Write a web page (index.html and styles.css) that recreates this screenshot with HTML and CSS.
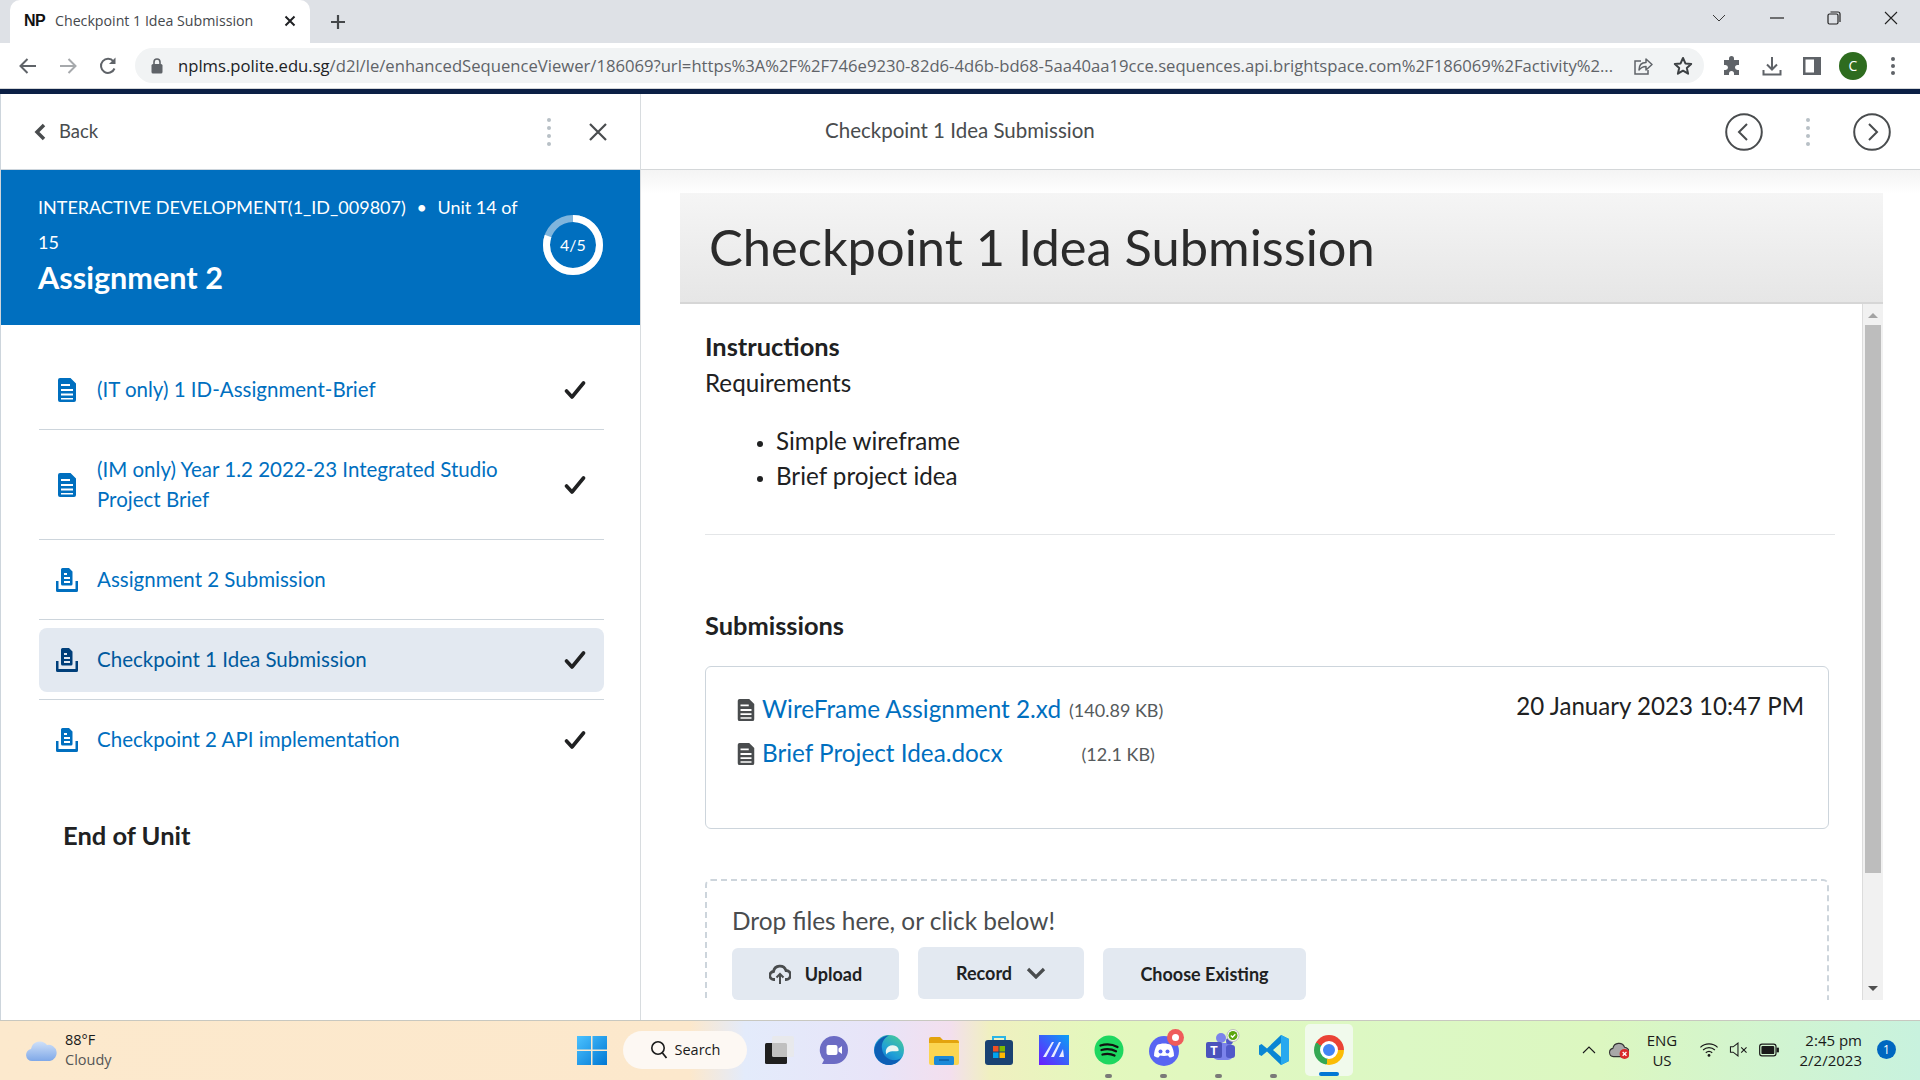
FILE: index.html
```html
<!DOCTYPE html>
<html lang="en">
<head>
<meta charset="utf-8">
<title>Checkpoint 1 Idea Submission</title>
<link rel="stylesheet" href="styles.css">
</head>
<body>
<svg class="defs" width="0" height="0" aria-hidden="true">
  <symbol id="doc" viewBox="0 0 18 24"><path fill-rule="evenodd" d="M2 0h10.500L18 5.500V22a2 2 0 0 1-2 2H2a2 2 0 0 1-2-2V2a2 2 0 0 1 2-2zM3 6v2h9V6zM3 11v2h12v-2zM3 15.500v2h12v-2zM3 20v1.500h12V20z"/></symbol>
  <symbol id="sub" viewBox="0 0 22 24"><path fill-rule="evenodd" d="M6.500 0H13l3.500 3.500V16a1.500 1.500 0 0 1-1.500 1.500H6.500A1.500 1.500 0 0 1 5 16V1.500A1.500 1.500 0 0 1 6.500 0zM8 5v2h3V5zM8 9v2h6V9zM8 13v2h6v-2z"/><path d="M0 13h2.500v8h17v-8H22v9.500a1.500 1.500 0 0 1-1.500 1.500h-19A1.500 1.500 0 0 1 0 22.500z"/></symbol>
  <symbol id="check" viewBox="0 0 22 20"><path d="M2.500 11l5.500 6L19.500 3" fill="none" stroke="currentColor" stroke-width="3.600" stroke-linecap="round" stroke-linejoin="round"/></symbol>
  <symbol id="vdots" viewBox="0 0 6 30"><g fill="#b8c0c6"><circle cx="3" cy="3" r="2"/><circle cx="3" cy="11" r="2"/><circle cx="3" cy="19" r="2"/><circle cx="3" cy="27" r="2"/></g></symbol>
</svg>

<header class="tabbar">
  <div class="tab">
    <span class="favicon">NP</span>
    <span class="tab-title">Checkpoint 1 Idea Submission</span>
    <svg class="tab-x" width="12" height="12" viewBox="0 0 12 12"><path d="M1.500 1.500l9 9M10.500 1.500l-9 9" stroke="#202124" stroke-width="2" fill="none"/></svg>
  </div>
  <svg class="new-tab" width="16" height="16" viewBox="0 0 16 16"><path d="M8 1v14M1 8h14" stroke="#44474a" stroke-width="2.200" fill="none"/></svg>
  <div class="win-controls">
    <svg class="wc-ch" width="14" height="8" viewBox="0 0 14 8"><path d="M1 1l6 6 6-6" stroke="#3a3a3a" fill="none"/></svg>
    <span class="wc"><svg width="14" height="2" viewBox="0 0 14 2"><path d="M0 1h14" stroke="#222" stroke-width="1.200"/></svg></span>
    <span class="wc"><svg width="14" height="14" viewBox="0 0 14 14"><rect x="1" y="3" width="10" height="10" rx="1.500" fill="none" stroke="#222" stroke-width="1.200"/><path d="M3.500 1H11a2 2 0 0 1 2 2v8" fill="none" stroke="#222" stroke-width="1.200"/></svg></span>
    <span class="wc"><svg width="14" height="14" viewBox="0 0 14 14"><path d="M1 1l12 12M13 1L1 13" stroke="#222" stroke-width="1.100" fill="none"/></svg></span>
  </div>
</header>

<nav class="toolbar">
  <svg class="tb-ico" width="20" height="20" viewBox="0 0 20 20"><path d="M18 10H3M9.500 3L2.500 10l7 7" stroke="#5f6368" stroke-width="2" fill="none"/></svg>
  <svg class="tb-ico" width="20" height="20" viewBox="0 0 20 20"><path d="M2 10h15M10.500 3l7 7-7 7" stroke="#a6a9ac" stroke-width="2" fill="none"/></svg>
  <svg class="tb-ico" width="20" height="20" viewBox="0 0 20 20"><path d="M16.500 12.500A7 7 0 1 1 15.500 5.500" stroke="#5f6368" stroke-width="2" fill="none"/><path d="M17.500 1.500V8H11z" fill="#5f6368"/></svg>
  <div class="omnibox">
    <svg class="lock" width="12" height="16" viewBox="0 0 12 16"><path d="M3 6V4a3 3 0 0 1 6 0v2" fill="none" stroke="#5f6368" stroke-width="1.600"/><rect x="0.500" y="6" width="11" height="9.500" rx="1.500" fill="#5f6368"/></svg>
    <span class="url"><span class="url-host">nplms.polite.edu.sg</span>/d2l/le/enhancedSequenceViewer/186069?url=https%3A%2F%2F746e9230-82d6-4d6b-bd68-5aa40aa19cce.sequences.api.brightspace.com%2F186069%2Factivity%2...</span>
    <svg class="omni-ico" width="20" height="20" viewBox="0 0 20 20"><path d="M8 5H2v13h13v-4" fill="none" stroke="#5f6368" stroke-width="1.500"/><path d="M6 14c0-5 3-7.500 7-7.500V3l6 5.500-6 5.500v-3.500c-3 0-5 1-7 3.500z" fill="none" stroke="#5f6368" stroke-width="1.500" stroke-linejoin="round"/></svg>
    <svg class="omni-ico" width="20" height="20" viewBox="0 0 20 20"><path d="M10 2l2.400 5.400 5.800.600-4.400 3.900 1.300 5.800L10 14.700l-5.100 3 1.300-5.800L1.800 8l5.800-.600z" fill="none" stroke="#3c4043" stroke-width="2" stroke-linejoin="round"/></svg>
  </div>
  <div class="tb-right">
    <svg width="20" height="20" viewBox="0 0 20 20"><path d="M7 2.500a2.500 2.500 0 0 1 5 0V4h5v5h-1.500a2.500 2.500 0 0 0 0 5H17v5h-5v-1.500a2.500 2.500 0 0 0-5 0V19H2v-5h1.500a2.500 2.500 0 0 0 0-5H2V4h5z" fill="#5f6368"/></svg>
    <svg width="20" height="20" viewBox="0 0 20 20"><path d="M10 1v12M5 8.500l5 5 5-5" stroke="#5f6368" stroke-width="2" fill="none"/><path d="M1.500 14v4.500h17V14" stroke="#5f6368" stroke-width="2" fill="none"/></svg>
    <svg width="20" height="20" viewBox="0 0 20 20"><path fill-rule="evenodd" d="M1 1h18v18H1zM3.500 3.500v13h8.500v-13z" fill="#5f6368"/></svg>
    <span class="avatar">C</span>
    <svg width="6" height="20" viewBox="0 0 6 20"><g fill="#5f6368"><circle cx="3" cy="3" r="2"/><circle cx="3" cy="10" r="2"/><circle cx="3" cy="17" r="2"/></g></svg>
  </div>
</nav>
<div class="navy"></div>

<main class="main">
  <aside class="side">
    <div class="side-top">
      <svg class="back-ch" width="12" height="18" viewBox="0 0 12 18"><path d="M10 2L3 9l7 7" stroke="#494c4e" stroke-width="3.500" fill="none"/></svg>
      <span class="back">Back</span>
      <svg class="side-dots" width="6" height="30"><use href="#vdots"/></svg>
      <svg class="side-x" width="20" height="20" viewBox="0 0 20 20"><path d="M2 2l16 16M18 2L2 18" stroke="#494c4e" stroke-width="2.200" fill="none"/></svg>
    </div>
    <div class="unit">
      <div class="unit-text">
        <p class="unit-crumb">INTERACTIVE DEVELOPMENT(1_ID_009807) <span class="dot">•</span> Unit 14 of 15</p>
        <h2 class="unit-title">Assignment 2</h2>
      </div>
      <div class="ring">
        <svg width="60" height="60" viewBox="0 0 60 60"><circle cx="30" cy="30" r="26.500" fill="none" stroke="#7fb5dd" stroke-width="7"/><circle cx="30" cy="30" r="26.500" fill="none" stroke="#fff" stroke-width="7" stroke-dasharray="133.200 33.300" transform="rotate(-90 30 30)"/></svg>
        <span class="ring-label">4/5</span>
      </div>
    </div>
    <ul class="items">
      <li class="row"><a class="item"><svg class="ico-doc"><use href="#doc"/></svg><span class="item-text">(IT only) 1 ID-Assignment-Brief</span><svg class="ico-check"><use href="#check"/></svg></a></li>
      <li class="row"><a class="item"><svg class="ico-doc"><use href="#doc"/></svg><span class="item-text">(IM only) Year 1.2 2022-23 Integrated Studio Project Brief</span><svg class="ico-check"><use href="#check"/></svg></a></li>
      <li class="row"><a class="item"><svg class="ico-sub"><use href="#sub"/></svg><span class="item-text">Assignment 2 Submission</span></a></li>
      <li class="row"><a class="item current"><svg class="ico-sub"><use href="#sub"/></svg><span class="item-text">Checkpoint 1 Idea Submission</span><svg class="ico-check"><use href="#check"/></svg></a></li>
      <li class="row last"><a class="item"><svg class="ico-sub"><use href="#sub"/></svg><span class="item-text">Checkpoint 2 API implementation</span><svg class="ico-check"><use href="#check"/></svg></a></li>
    </ul>
    <h3 class="end">End of Unit</h3>
  </aside>

  <section class="content">
    <div class="content-top">
      <span class="content-title">Checkpoint 1 Idea Submission</span>
      <div class="pager">
        <svg width="38" height="38" viewBox="0 0 38 38"><circle cx="19" cy="19" r="17.800" fill="none" stroke="#494c4e" stroke-width="2"/><path d="M22 11l-8 8 8 8" fill="none" stroke="#494c4e" stroke-width="2"/></svg>
        <svg width="6" height="30"><use href="#vdots"/></svg>
        <svg width="38" height="38" viewBox="0 0 38 38"><circle cx="19" cy="19" r="17.800" fill="none" stroke="#494c4e" stroke-width="2"/><path d="M16 11l8 8-8 8" fill="none" stroke="#494c4e" stroke-width="2"/></svg>
      </div>
    </div>
    <div class="page">
      <div class="page-head"><h1 class="page-title">Checkpoint 1 Idea Submission</h1></div>
      <div class="frame">
        <div class="frame-body">
          <h4 class="sec">Instructions</h4>
          <p class="req">Requirements</p>
          <ul class="bullets"><li>Simple wireframe</li><li>Brief project idea</li></ul>
          <hr class="rule">
          <h4 class="sec sec-sub">Submissions</h4>
          <div class="files">
            <div class="file-list">
              <div class="file"><svg class="ico-file"><use href="#doc"/></svg><a class="file-link">WireFrame Assignment 2.xd</a><span class="file-size">(140.89 KB)</span></div>
              <div class="file"><svg class="ico-file"><use href="#doc"/></svg><a class="file-link">Brief Project Idea.docx</a><span class="file-size wide">(12.1 KB)</span></div>
            </div>
            <div class="file-date">20 January 2023 10:47 PM</div>
          </div>
          <div class="drop">
            <p class="drop-text">Drop files here, or click below!</p>
            <div class="btns">
              <button class="btn btn-up"><svg width="22" height="22" viewBox="0 0 22 22"><path d="M6 16.500H5a4 4 0 0 1-.500-8A6.500 6.500 0 0 1 17 7.500a4.500 4.500 0 0 1 0 9h-1" fill="none" stroke="#494c4e" stroke-width="2.800"/><path d="M11 21v-9M7.500 14.500L11 11l3.500 3.500" fill="none" stroke="#494c4e" stroke-width="2"/></svg>Upload</button>
              <button class="btn btn-rec">Record<svg width="20" height="12" viewBox="0 0 20 12"><path d="M2 2l8 8 8-8" fill="none" stroke="#494c4e" stroke-width="3.200"/></svg></button>
              <button class="btn btn-ch">Choose Existing</button>
            </div>
          </div>
        </div>
        <div class="scrollbar">
          <span class="arr arr-up"></span>
          <span class="track"><span class="thumb"></span></span>
          <span class="arr arr-dn"></span>
        </div>
      </div>
    </div>
  </section>
</main>

<footer class="taskbar">
  <div class="weather">
    <svg width="32" height="24" viewBox="0 0 32 24"><defs><linearGradient id="cl" x1="0" y1="0" x2="0" y2="1"><stop offset="0" stop-color="#cfe0f8"/><stop offset="1" stop-color="#7fa8e8"/></linearGradient></defs><path d="M7 23a6 6 0 0 1-1-11.900A9 9 0 0 1 22 7a7 7 0 0 1 3 16z" fill="url(#cl)"/></svg>
    <div class="weather-text"><span class="temp">88°F</span><span class="cond">Cloudy</span></div>
  </div>
  <div class="apps">
    <span class="slot"><svg width="30" height="30" viewBox="0 0 30 30"><defs><linearGradient id="wn" x1="0" y1="0" x2="1" y2="1"><stop offset="0" stop-color="#4cc2ff"/><stop offset="1" stop-color="#0078d4"/></linearGradient></defs><path fill="url(#wn)" d="M0 1h14v13.500H0zM15.500 1H30v13.500H15.500zM0 16h14v14H0zM15.500 16H30v14H15.500z"/></svg></span>
    <span class="search"><svg width="18" height="20" viewBox="0 0 18 20"><circle cx="8" cy="8" r="6.200" fill="none" stroke="#1a1a1a" stroke-width="1.600"/><path d="M12.500 13l4 5" stroke="#1a1a1a" stroke-width="1.800"/></svg>Search</span>
    <span class="slot"><svg width="30" height="30" viewBox="0 0 30 30"><rect x="1" y="8" width="22" height="21" rx="1.500" fill="#1f1f1f"/><rect x="8" y="1" width="22" height="21" rx="1.500" fill="#e8e8e8" fill-opacity=".8"/></svg></span>
    <span class="slot"><svg width="30" height="30" viewBox="0 0 30 30"><path d="M15 1a14 14 0 0 1 0 28H3l2-4A14 14 0 0 1 15 1z" fill="#6c6cc4"/><rect x="7.500" y="10" width="11" height="10" rx="2" fill="#fff"/><path d="M19.500 13.500l3.500-2.500v8l-3.500-2.500z" fill="#fff"/></svg></span>
    <span class="slot"><svg width="30" height="30" viewBox="0 0 30 30"><defs><linearGradient id="ed" x1="1" y1="0" x2="0.300" y2="1"><stop offset="0" stop-color="#4ed18f"/><stop offset="0.600" stop-color="#1f9fd8"/><stop offset="1" stop-color="#0f6cc2"/></linearGradient></defs><circle cx="15" cy="15" r="15" fill="url(#ed)"/><path d="M0.500 15C1 7 8 0.500 15 0.500 10 3 7 8 8 14c1 8 8 12 14 11 2 0 4-1 5.500-2.500-3 5-8 7.500-12.500 7.500C7 30 0.500 23 0.500 15z" fill="#0d5fb5"/><path d="M12 15c1-4 6-6 10-4 2 1 3 3 2.500 5-3 .500-6 0-8 .500-2 .500-4 2-4 3-.500-1-1-3-.500-4.500z" fill="#eaf6f2"/></svg></span>
    <span class="slot"><svg width="30" height="30" viewBox="0 0 30 30"><path d="M0 4a2 2 0 0 1 2-2h9l3 3h14a2 2 0 0 1 2 2v4H0z" fill="#e3a30d"/><path d="M0 8h30v20a2 2 0 0 1-2 2H2a2 2 0 0 1-2-2z" fill="#fbd551"/><rect x="5" y="21" width="20" height="9" rx="1.500" fill="#1b89d8"/><path d="M10 25h10" stroke="#0b5fa5" stroke-width="1.500"/></svg></span>
    <span class="slot"><svg width="30" height="30" viewBox="0 0 30 30"><path d="M9 6V2h12v4" fill="none" stroke="#2bb5e6" stroke-width="2"/><rect x="1" y="5" width="28" height="25" rx="3" fill="#1a4272"/><rect x="9" y="11" width="5.500" height="5.500" fill="#f25022"/><rect x="15.500" y="11" width="5.500" height="5.500" fill="#7fba00"/><rect x="9" y="17.500" width="5.500" height="5.500" fill="#00a4ef"/><rect x="15.500" y="17.500" width="5.500" height="5.500" fill="#ffb900"/></svg></span>
    <span class="slot"><svg width="30" height="30" viewBox="0 0 30 30"><defs><linearGradient id="ma" x1="0" y1="1" x2="1" y2="0"><stop offset="0" stop-color="#6a1cff"/><stop offset="1" stop-color="#0aa0f5"/></linearGradient></defs><rect width="30" height="30" fill="url(#ma)"/><path d="M4 22L13 7h2L7 22zM12 22L20 7h2l-7 15zM20 22l4-8 1 8z" fill="#e8ecff"/></svg></span>
    <span class="slot has-dot"><svg width="30" height="30" viewBox="0 0 30 30"><circle cx="15" cy="15" r="14.500" fill="#1ed760"/><path d="M6.500 10.500c6-1.700 12-1.200 17 1.500M7.500 15c5-1.300 10-1 14.500 1.300M8.500 19.500c4-1 8.500-.8 12 1" fill="none" stroke="#111" stroke-width="2.300" stroke-linecap="round"/></svg></span>
    <span class="slot has-dot"><svg class="over" width="36" height="38" viewBox="0 0 36 38"><circle cx="15" cy="23" r="15" fill="#5865f2"/><path d="M8 17c4-2 10-2 14 0 2 3 3 7 3 11-2 1-3 1.500-4.500 1.500L19 27.500c-2 .5-6 .5-8 0L9.500 29.500C8 29.500 7 29 5 28c0-4 1-8 3-11z" fill="#fff"/><circle cx="11.500" cy="23.500" r="2" fill="#5865f2"/><circle cx="18.500" cy="23.500" r="2" fill="#5865f2"/><circle cx="26.500" cy="9.500" r="8.500" fill="#ef5b5b"/><circle cx="26.500" cy="9.500" r="3.500" fill="#fff"/></svg></span>
    <span class="slot has-dot"><svg class="over" width="36" height="36" viewBox="0 0 36 36"><circle cx="17" cy="9" r="5" fill="#7b83eb"/><rect x="9" y="14" width="20" height="17" rx="5" fill="#7b83eb"/><circle cx="25.500" cy="12" r="3.500" fill="#5059c9"/><rect x="22" y="16" width="9" height="13" rx="3" fill="#5059c9"/><rect x="2" y="13" width="16" height="16" rx="2" fill="#4b53bc"/><text class="teams-t" x="10" y="26">T</text><circle cx="29" cy="6.500" r="6" fill="#fff" stroke="#bbb"/><circle cx="29" cy="6.500" r="4.500" fill="#5ba60f"/><path d="M26.800 6.500l1.700 1.700 2.800-3" fill="none" stroke="#fff" stroke-width="1.300"/></svg></span>
    <span class="slot has-dot"><svg width="30" height="32" viewBox="0 0 30 32"><path d="M22 1L30 5v22l-8 4L8 17.500 2.500 22 0 20.500v-9L2.500 10 8 14.500zM22 9l-8 7 8 7z" fill-rule="evenodd" fill="#0a86d4"/><path d="M22 1L30 5v22l-8 4z" fill="#27a9ef"/></svg></span>
    <span class="slot active"><span class="chrome"><span class="chrome-in"></span></span></span>
  </div>
  <div class="tray">
    <svg width="14" height="8" viewBox="0 0 14 8"><path d="M1 7l6-6 6 6" fill="none" stroke="#1a1a1a" stroke-width="1.100"/></svg>
    <svg class="t-cloud" width="20" height="18" viewBox="0 0 18 16"><path d="M4 14a3.800 3.800 0 0 1-.500-7.500A5.500 5.500 0 0 1 14 5.500a4 4 0 0 1-.500 8.500z" fill="#a8a8a8" stroke="#333" stroke-width="1"/><circle cx="14" cy="11.500" r="4.500" fill="#d92b2b"/><path d="M12.300 9.800l3.400 3.400M15.700 9.800l-3.400 3.400" stroke="#fff" stroke-width="1.100"/></svg>
    <span class="lang"><span>ENG</span><span>US</span></span>
    <svg class="t-wifi" width="20" height="15" viewBox="0 0 18 14"><path d="M1 5a11.500 11.500 0 0 1 16 0M3.500 7.500a8 8 0 0 1 11 0M6 10a4.500 4.500 0 0 1 6 0" fill="none" stroke="#1a1a1a" stroke-width="1.100"/><circle cx="9" cy="12.500" r="1.300" fill="#1a1a1a"/></svg>
    <svg class="t-vol" width="19" height="15" viewBox="0 0 17 14"><path d="M1 4.500h2.500L8 1v12L3.500 9.500H1z" fill="none" stroke="#1a1a1a" stroke-width="1"/><path d="M11 5l5 5M16 5l-5 5" stroke="#1a1a1a" stroke-width="1"/></svg>
    <svg class="t-bat" width="20" height="14" viewBox="0 0 17 12"><rect x="0.500" y="1" width="14" height="10" rx="2" fill="none" stroke="#1a1a1a"/><rect x="2" y="2.500" width="11" height="7" rx="1" fill="#1a1a1a"/><rect x="15" y="4" width="2" height="4" fill="#1a1a1a"/></svg>
    <span class="clock"><span>2:45 pm</span><span>2/2/2023</span></span>
    <span class="badge">1</span>
  </div>
</footer>
</body>
</html>
```

FILE: styles.css
```css
* { box-sizing: border-box; }
html, body { margin: 0; height: 100%; }
body { width: 1920px; height: 1080px; overflow: hidden; display: flex; flex-direction: column; font-family: "Lato", "Noto Sans", sans-serif; background: #fff; color: #202122; }
.defs { position: absolute; }
p, h1, h2, h3, h4, ul { margin: 0; padding: 0; }

.tabbar { height: 43px; flex: none; background: #dee1e6; display: flex; align-items: center; padding-left: 10px; }
.tab { width: 300px; height: 43px; background: #fff; border-radius: 10px 10px 0 0; display: flex; align-items: center; padding: 0 14px 2px; align-self: flex-end; }
.favicon { font: 700 16px "Liberation Sans", sans-serif; color: #111; width: 31px; letter-spacing: -0.500px; }
.tab-title { font: 14.200px "Open Sans", sans-serif; color: #45484c; flex: 1; white-space: nowrap; }
.new-tab { margin-left: 20px; }
.win-controls { margin-left: auto; display: flex; align-items: center; height: 36px; align-self: flex-start; padding-right: 1px; }
.wc-ch { margin-right: 22px; }
.wc { width: 57px; display: flex; justify-content: center; }

.toolbar { height: 46px; flex: none; background: #fff; display: flex; align-items: center; padding-left: 18px; border-bottom: 1px solid #d4d6d8; }
.tb-ico { margin-right: 20px; }
.omnibox { width: 1569px; margin-left: -3px; height: 35px; border-radius: 18px; background: #f1f3f4; display: flex; align-items: center; padding: 0 11px 0 16px; }
.lock { flex: none; margin-right: 15px; }
.url { font: 16.650px "Open Sans", sans-serif; color: #5f6368; white-space: nowrap; flex: 1; min-width: 0; }
.url-host { color: #202124; }
.omni-ico { flex: none; margin-left: 20px; }
.tb-right { display: flex; align-items: center; gap: 20px; margin-left: 18px; }
.avatar { width: 28px; height: 28px; flex: none; margin: 0 3px 0 -3px; border-radius: 50%; background: #2e6c1f; color: #fff; font: 14px "Open Sans", sans-serif; display: flex; align-items: center; justify-content: center; }
.navy { height: 5px; flex: none; background: #0b1f45; }

.main { height: 926px; flex: none; display: flex; }

.side { width: 641px; flex: none; border-left: 1px solid #cdd5dc; border-right: 1px solid #d8dcdf; display: flex; flex-direction: column; }
.side-top { height: 76px; flex: none; display: flex; align-items: center; padding: 0 32px 0 34px; border-bottom: 1px solid #cdd5dc; margin-left: -1px; }
.back { font-size: 18.500px; color: #494c4e; margin: 0 0 2px 13px; }
.side-dots { margin-left: auto; margin-right: 36px; }
.unit { height: 155px; flex: none; background: #006fbf; color: #fff; display: flex; padding: 20px 35px 0 37px; }
.unit-text { width: 491px; }
.unit-crumb { font-size: 18px; line-height: 35px; }
.dot { margin: 0 6px; }
.unit-title { font-size: 30.600px; font-weight: 700; line-height: 35px; }
.ring { margin: 25px 0 0 14px; width: 60px; height: 60px; position: relative; display: flex; align-items: center; justify-content: center; }
.ring svg { position: absolute; inset: 0; }
.ring-label { font-size: 16px; margin-bottom: 2px; }

.items { list-style: none; padding: 25px 36px 0 38px; }
.row { padding: 8px 0 7px; border-bottom: 1px solid #cdd5dc; }
.row.last { border-bottom: 0; }
.item { min-height: 64px; display: flex; align-items: center; padding: 15.500px 18px 15.500px 16px; border-radius: 8px; color: #006fbf; font-size: 20.500px; line-height: 30px; }
.item.current { background: #e3e9f1; color: #003f7a; }
.item.current .item-text { color: #005a9e; }
.ico-doc, .ico-sub { flex: none; width: 24px; height: 24px; fill: currentColor; margin-right: 18px; }
.item-text { flex: 1; padding-right: 30px; margin-bottom: 3px; }
.ico-check { flex: none; width: 22px; height: 20px; color: #202122; }
.end { font-size: 25.500px; font-weight: 700; line-height: 30px; margin: 41px 0 0 62px; }

.content { flex: 1; min-width: 0; display: flex; flex-direction: column; }
.content-top { height: 76px; flex: none; display: flex; align-items: center; justify-content: space-between; padding: 0 29px 0 184px; border-bottom: 1px solid #d4d7d9; }
.content-title { font-size: 20.500px; color: #494c4e; margin-bottom: 3px; }
.pager { display: flex; align-items: center; gap: 42px; }
.page { flex: 1; min-height: 0; display: flex; flex-direction: column; padding: 23px 37px 20px 39px; background: linear-gradient(#f4f4f4, #fff 24px); }
.page-head { height: 111px; flex: none; background: linear-gradient(#f5f5f5, #e6e6e6); border-bottom: 2px solid #d6d6d6; padding: 0 0 2px 29px; display: flex; align-items: center; }
.page-title { font-size: 50.600px; font-weight: 400; color: #2b2b2b; }
.frame { flex: 1; min-height: 0; display: flex; overflow: hidden; background: #fff; }
.frame-body { flex: 1; min-width: 0; padding: 27px 27px 0 25px; border-radius: 6px 6px 0 0; }
.sec { font-size: 25.400px; font-weight: 700; line-height: 30px; }
.req { font-size: 24.200px; line-height: 30px; margin-top: 7px; }
.bullets { font-size: 24.200px; line-height: 35px; margin: 25px 0 0; padding-left: 71px; }
.bullets li::marker { font-size: 18px; }
.rule { border: 0; border-top: 1px solid #e4e6e8; margin: 41px 0 0; }
.sec-sub { margin-top: 75px; }
.files { margin: 26px 6px 0 0; height: 163px; border: 1px solid #cdd5dc; border-radius: 6px; padding: 21px 24px 0 31px; display: flex; justify-content: space-between; }
.file { height: 44px; display: flex; align-items: center; }
.ico-file { width: 18px; height: 22px; fill: #494c4e; margin-right: 7px; flex: none; }
.file-link { font-size: 24.300px; color: #006fbf; margin-bottom: 3px; }
.file-size { font-size: 18px; color: #565a5c; margin-left: 8px; }
.file-size.wide { margin-left: 79px; }
.file-date { font-size: 24.100px; line-height: 36px; color: #202122; }
.drop { margin: 50px 6px 0 0; height: 240px; border: 2px dashed #cdd5dc; border-radius: 6px; padding: 25px 25px; }
.drop-text { font-size: 24.400px; line-height: 30px; color: #494c4e; }
.btns { display: flex; gap: 19px; align-items: flex-start; margin-top: 12px; }
.btn { height: 52px; border: 0; border-radius: 6px; background: #e3e9f1; color: #202122; font: 700 18px "Lato", sans-serif; display: flex; align-items: center; justify-content: center; gap: 14px; padding: 0; }
.btn-up { width: 167px; }
.btn-rec { width: 166px; margin-top: -1px; }
.btn-ch { width: 203px; }

.scrollbar { width: 21px; flex: none; background: #f1f1f1; border-left: 1px solid #dcdcdc; display: flex; flex-direction: column; align-items: center; padding: 0 2px; }
.arr { width: 0; height: 0; border-left: 5px solid transparent; border-right: 5px solid transparent; flex: none; }
.arr-up { border-bottom: 5px solid #a3a3a3; margin: 9px 0 7px; }
.arr-dn { border-top: 5px solid #505050; margin: 9px 0 9px; }
.track { flex: 1; width: 100%; }
.thumb { display: block; height: 548px; background: #bdbdbd; }

.taskbar { height: 60px; flex: none; display: flex; align-items: center; padding: 0 0 2px 25px; border-top: 1px solid #c8c8c0; background: linear-gradient(90deg, #fce9cd 0, #fce8cc 690px, #e3ebfb 745px, #e8e4f8 880px, #f3dfee 950px, #f0f0c0 990px, #e3f8bd 1100px, #dcf8c4 1400px, #dcf7c0 1600px, #c8f2de 1920px); }
.weather { width: 539px; flex: none; display: flex; align-items: center; gap: 8px; }
.weather-text { display: flex; flex-direction: column; font: 14.500px/20px "Open Sans", sans-serif; color: #1a1a1a; }
.cond { color: #555; }
.apps { display: flex; align-items: center; height: 57px; }
.slot { width: 55px; height: 56px; flex: none; display: flex; align-items: center; justify-content: center; position: relative; }
.over { position: relative; top: -3px; margin-left: 6px; }
.has-dot::after { content: ""; position: absolute; left: 24px; bottom: 0; width: 7px; height: 4px; border-radius: 2px; background: #7a7a78; }
.active { background: #f1faec; border-radius: 5px; width: 48px; height: 52px; margin-left: 4px; }
.active::after { content: ""; position: absolute; left: 14px; bottom: 0; width: 20px; height: 4px; border-radius: 2px; background: #0078d4; }
.chrome { width: 30px; height: 30px; border-radius: 50%; display: flex; align-items: center; justify-content: center; background: conic-gradient(#ea4335 0 90deg, #fbbc04 90deg 190deg, #34a853 190deg 300deg, #ea4335 300deg); }
.chrome-in { width: 12px; height: 12px; border-radius: 50%; background: #4285f4; border: 3px solid #fff; box-sizing: content-box; }
.search { width: 124px; height: 38px; flex: none; margin: 0 4px 0 4px; border-radius: 19px; background: #fdf8f3; display: flex; align-items: center; justify-content: center; gap: 7px; font: 14.500px "Open Sans", sans-serif; color: #1a1a1a; }
.teams-t { font: 700 12px "Liberation Sans", sans-serif; fill: #fff; text-anchor: middle; }

.tray { margin-left: auto; display: flex; align-items: center; height: 100%; padding-right: 24px; color: #1a1a1a; font: 15px/20px "Open Sans", sans-serif; }
.t-cloud { margin-left: 13px; }
.lang { display: flex; flex-direction: column; align-items: center; width: 60px; margin-left: 3px; }
.t-wifi { margin-left: 7px; }
.t-vol { margin-left: 10px; }
.t-bat { margin-left: 11px; }
.clock { display: flex; flex-direction: column; align-items: flex-end; width: 66px; margin-left: 17px; white-space: nowrap; }
.badge { width: 19px; height: 19px; border-radius: 50%; background: #0067c0; color: #fff; font-size: 12px; display: flex; align-items: center; justify-content: center; margin-left: 15px; }
```
